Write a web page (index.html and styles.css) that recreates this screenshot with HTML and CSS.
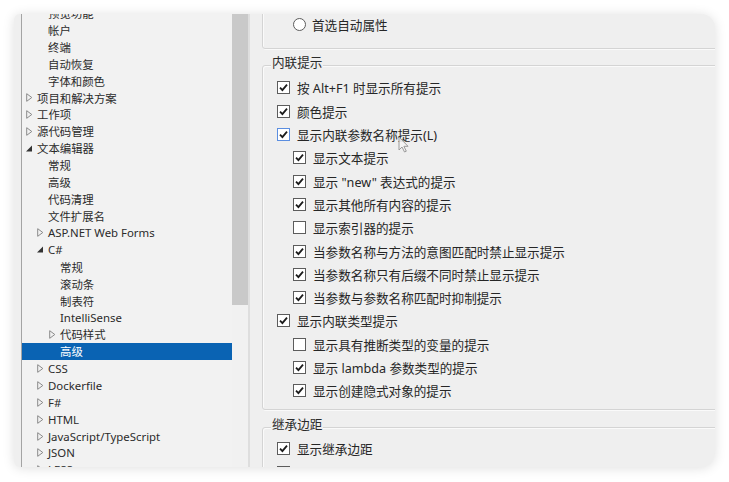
FILE: index.html
```html
<!DOCTYPE html>
<html lang="zh-CN">
<head>
<meta charset="utf-8">
<title>选项</title>
<link rel="stylesheet" href="styles.css">
</head>
<body>
<div class="card">
  <div class="tree">
    <ul class="tree-list">
      <li class="trow lv1"><span class="slot"></span>预览功能</li>
      <li class="trow lv1"><span class="slot"></span>帐户</li>
      <li class="trow lv1"><span class="slot"></span>终端</li>
      <li class="trow lv1"><span class="slot"></span>自动恢复</li>
      <li class="trow lv1"><span class="slot"></span>字体和颜色</li>
      <li class="trow lv0"><span class="slot"><svg class="arr" width="7" height="9" viewBox="0 0 7 9"><polygon points="0.7,0.7 5.8,4.5 0.7,8.3" fill="none" stroke="#8a8a8a" stroke-width="1"/></svg></span>项目和解决方案</li>
      <li class="trow lv0"><span class="slot"><svg class="arr" width="7" height="9" viewBox="0 0 7 9"><polygon points="0.7,0.7 5.8,4.5 0.7,8.3" fill="none" stroke="#8a8a8a" stroke-width="1"/></svg></span>工作项</li>
      <li class="trow lv0"><span class="slot"><svg class="arr" width="7" height="9" viewBox="0 0 7 9"><polygon points="0.7,0.7 5.8,4.5 0.7,8.3" fill="none" stroke="#8a8a8a" stroke-width="1"/></svg></span>源代码管理</li>
      <li class="trow lv0"><span class="slot"><svg class="arr" width="7" height="9" viewBox="0 0 7 9"><polygon points="6,1.5 6,7.5 0,7.5" fill="#333"/></svg></span>文本编辑器</li>
      <li class="trow lv1"><span class="slot"></span>常规</li>
      <li class="trow lv1"><span class="slot"></span>高级</li>
      <li class="trow lv1"><span class="slot"></span>代码清理</li>
      <li class="trow lv1"><span class="slot"></span>文件扩展名</li>
      <li class="trow lv1"><span class="slot"><svg class="arr" width="7" height="9" viewBox="0 0 7 9"><polygon points="0.7,0.7 5.8,4.5 0.7,8.3" fill="none" stroke="#8a8a8a" stroke-width="1"/></svg></span>ASP.NET Web Forms</li>
      <li class="trow lv1"><span class="slot"><svg class="arr" width="7" height="9" viewBox="0 0 7 9"><polygon points="6,1.5 6,7.5 0,7.5" fill="#333"/></svg></span>C#</li>
      <li class="trow lv2"><span class="slot"></span>常规</li>
      <li class="trow lv2"><span class="slot"></span>滚动条</li>
      <li class="trow lv2"><span class="slot"></span>制表符</li>
      <li class="trow lv2"><span class="slot"></span>IntelliSense</li>
      <li class="trow lv2"><span class="slot"><svg class="arr" width="7" height="9" viewBox="0 0 7 9"><polygon points="0.7,0.7 5.8,4.5 0.7,8.3" fill="none" stroke="#8a8a8a" stroke-width="1"/></svg></span>代码样式</li>
      <li class="trow lv2 selected"><span class="slot"></span>高级</li>
      <li class="trow lv1"><span class="slot"><svg class="arr" width="7" height="9" viewBox="0 0 7 9"><polygon points="0.7,0.7 5.8,4.5 0.7,8.3" fill="none" stroke="#8a8a8a" stroke-width="1"/></svg></span>CSS</li>
      <li class="trow lv1"><span class="slot"><svg class="arr" width="7" height="9" viewBox="0 0 7 9"><polygon points="0.7,0.7 5.8,4.5 0.7,8.3" fill="none" stroke="#8a8a8a" stroke-width="1"/></svg></span>Dockerfile</li>
      <li class="trow lv1"><span class="slot"><svg class="arr" width="7" height="9" viewBox="0 0 7 9"><polygon points="0.7,0.7 5.8,4.5 0.7,8.3" fill="none" stroke="#8a8a8a" stroke-width="1"/></svg></span>F#</li>
      <li class="trow lv1"><span class="slot"><svg class="arr" width="7" height="9" viewBox="0 0 7 9"><polygon points="0.7,0.7 5.8,4.5 0.7,8.3" fill="none" stroke="#8a8a8a" stroke-width="1"/></svg></span>HTML</li>
      <li class="trow lv1"><span class="slot"><svg class="arr" width="7" height="9" viewBox="0 0 7 9"><polygon points="0.7,0.7 5.8,4.5 0.7,8.3" fill="none" stroke="#8a8a8a" stroke-width="1"/></svg></span>JavaScript/TypeScript</li>
      <li class="trow lv1"><span class="slot"><svg class="arr" width="7" height="9" viewBox="0 0 7 9"><polygon points="0.7,0.7 5.8,4.5 0.7,8.3" fill="none" stroke="#8a8a8a" stroke-width="1"/></svg></span>JSON</li>
      <li class="trow lv1"><span class="slot"><svg class="arr" width="7" height="9" viewBox="0 0 7 9"><polygon points="0.7,0.7 5.8,4.5 0.7,8.3" fill="none" stroke="#8a8a8a" stroke-width="1"/></svg></span>LESS</li>
    </ul>
  </div>
  <div class="scroll"><div class="thumb"></div><div class="track"></div></div>
  <div class="panel">
    <div class="group g1">
      <div class="opt l2"><span class="radio"></span><span>首选自动属性</span></div>
    </div>
    <div class="group g2">
      <span class="legend">内联提示</span>
      <div class="opt"><span class="box"><svg viewBox="0 0 11 11" width="11" height="11"><path d="M2 5.6 L4.4 8.1 L9 2.6" fill="none" stroke="#1b1b1b" stroke-width="1.8"/></svg></span><span>按 Alt+F1 时显示所有提示</span></div>
      <div class="opt"><span class="box"><svg viewBox="0 0 11 11" width="11" height="11"><path d="M2 5.6 L4.4 8.1 L9 2.6" fill="none" stroke="#1b1b1b" stroke-width="1.8"/></svg></span><span>颜色提示</span></div>
      <div class="opt"><span class="box focus"><svg viewBox="0 0 11 11" width="11" height="11"><path d="M2 5.6 L4.4 8.1 L9 2.6" fill="none" stroke="#1b1b1b" stroke-width="1.8"/></svg></span><span>显示内联参数名称提示(L)</span></div>
      <div class="opt l2"><span class="box"><svg viewBox="0 0 11 11" width="11" height="11"><path d="M2 5.6 L4.4 8.1 L9 2.6" fill="none" stroke="#1b1b1b" stroke-width="1.8"/></svg></span><span>显示文本提示</span></div>
      <div class="opt l2"><span class="box"><svg viewBox="0 0 11 11" width="11" height="11"><path d="M2 5.6 L4.4 8.1 L9 2.6" fill="none" stroke="#1b1b1b" stroke-width="1.8"/></svg></span><span>显示 "new" 表达式的提示</span></div>
      <div class="opt l2"><span class="box"><svg viewBox="0 0 11 11" width="11" height="11"><path d="M2 5.6 L4.4 8.1 L9 2.6" fill="none" stroke="#1b1b1b" stroke-width="1.8"/></svg></span><span>显示其他所有内容的提示</span></div>
      <div class="opt l2"><span class="box"></span><span>显示索引器的提示</span></div>
      <div class="opt l2"><span class="box"><svg viewBox="0 0 11 11" width="11" height="11"><path d="M2 5.6 L4.4 8.1 L9 2.6" fill="none" stroke="#1b1b1b" stroke-width="1.8"/></svg></span><span>当参数名称与方法的意图匹配时禁止显示提示</span></div>
      <div class="opt l2"><span class="box"><svg viewBox="0 0 11 11" width="11" height="11"><path d="M2 5.6 L4.4 8.1 L9 2.6" fill="none" stroke="#1b1b1b" stroke-width="1.8"/></svg></span><span>当参数名称只有后缀不同时禁止显示提示</span></div>
      <div class="opt l2"><span class="box"><svg viewBox="0 0 11 11" width="11" height="11"><path d="M2 5.6 L4.4 8.1 L9 2.6" fill="none" stroke="#1b1b1b" stroke-width="1.8"/></svg></span><span>当参数与参数名称匹配时抑制提示</span></div>
      <div class="opt"><span class="box"><svg viewBox="0 0 11 11" width="11" height="11"><path d="M2 5.6 L4.4 8.1 L9 2.6" fill="none" stroke="#1b1b1b" stroke-width="1.8"/></svg></span><span>显示内联类型提示</span></div>
      <div class="opt l2"><span class="box"></span><span>显示具有推断类型的变量的提示</span></div>
      <div class="opt l2"><span class="box"><svg viewBox="0 0 11 11" width="11" height="11"><path d="M2 5.6 L4.4 8.1 L9 2.6" fill="none" stroke="#1b1b1b" stroke-width="1.8"/></svg></span><span>显示 lambda 参数类型的提示</span></div>
      <div class="opt l2"><span class="box"><svg viewBox="0 0 11 11" width="11" height="11"><path d="M2 5.6 L4.4 8.1 L9 2.6" fill="none" stroke="#1b1b1b" stroke-width="1.8"/></svg></span><span>显示创建隐式对象的提示</span></div>
    </div>
    <div class="group g3">
      <span class="legend">继承边距</span>
      <div class="opt"><span class="box"><svg viewBox="0 0 11 11" width="11" height="11"><path d="M2 5.6 L4.4 8.1 L9 2.6" fill="none" stroke="#1b1b1b" stroke-width="1.8"/></svg></span><span>显示继承边距</span></div>
      <div class="opt"><span class="box"></span><span>将继承边距与指示器边距合并</span></div>
    </div>
    <svg class="pointer" width="12" height="17" viewBox="0 0 12 17"><path d="M1 1 L1 14 L4 11 L6.5 16 L8.3 15.2 L5.9 10.3 L10 10.3 Z" fill="#f4f4f4" fill-opacity="0.85" stroke="#9a9a9a" stroke-width="1" stroke-linejoin="round"/></svg>
  </div>
</div>
</body>
</html>
```

FILE: styles.css
```css
html, body {
  margin: 0;
  padding: 0;
}

body {
  width: 729px;
  height: 482px;
  overflow: hidden;
  background: #ffffff;
  font-family: "Noto Sans", "Noto Sans CJK SC", sans-serif;
}

.card {
  margin: 14px 0 0 14px;
  width: 701px;
  height: 453px;
  box-sizing: border-box;
  padding-left: 7px;
  display: flex;
  background: #efefef;
  border-radius: 6px 14px 14px 6px;
  box-shadow: 0 1px 12px rgba(0, 0, 0, 0.13);
  overflow: hidden;
}

/* ---------- tree ---------- */
.tree {
  flex: none;
  width: 211px;
  box-sizing: border-box;
  border-left: 1px solid #a4a4a4;
  background: #f2f2f2;
  overflow: hidden;
}

.tree-list {
  list-style: none;
  margin: -9.5px 0 0;
  padding: 0;
}

.trow {
  height: 16.93px;
  display: flex;
  align-items: center;
  font-size: 11.4px;
  color: #2b2b2b;
  white-space: nowrap;
}

.trow.lv0 { padding-left: 3px; }
.trow.lv1 { padding-left: 14px; }
.trow.lv2 { padding-left: 26px; }

.trow.selected {
  background: #0a63b3;
  color: #ffffff;
}

.slot {
  flex: none;
  width: 12px;
  height: 100%;
  display: flex;
  align-items: center;
}

.arr {
  margin-left: 1px;
  display: block;
}

/* ---------- scrollbar ---------- */
.scroll {
  flex: none;
  width: 18px;
  box-sizing: border-box;
  border-right: 2px solid #dedede;
  display: flex;
  flex-direction: column;
}

.thumb {
  height: 291px;
  background: #c9c9c9;
}

.track {
  flex: 1;
  background: #f1f1f1;
}

/* ---------- right panel ---------- */
.panel {
  flex: 1;
  min-width: 0;
  position: relative;
  padding-left: 12px;
}

.group {
  position: relative;
  margin-right: -30px;
  border: 1px solid #d4d4d4;
  border-radius: 3px;
  box-shadow: inset 1px 1px 0 #fafafa, 1px 1px 0 #fafafa;
  padding-left: 14px;
}

.g1 {
  margin-top: -20px;
  padding-top: 17.5px;
  padding-bottom: 12.5px;
}

.g2 {
  margin-top: 15.7px;
  padding-top: 10.35px;
  padding-bottom: 6.45px;
}

.g3 {
  margin-top: 17px;
  padding-top: 9.35px;
}

.legend {
  position: absolute;
  left: 8px;
  top: -11px;
  height: 16px;
  line-height: 16px;
  padding: 0 1px;
  background: #efefef;
  font-size: 12.6px;
  color: #2b2b2b;
}

.opt {
  height: 23.3px;
  display: flex;
  align-items: center;
  font-size: 12.6px;
  color: #262626;
  white-space: nowrap;
}

.opt.l2 {
  padding-left: 16px;
}

.box {
  flex: none;
  width: 13px;
  height: 13px;
  box-sizing: border-box;
  border: 1px solid #5c5c5c;
  background: #ffffff;
  margin-right: 7px;
  display: flex;
  align-items: center;
  justify-content: center;
}

.box svg {
  display: block;
}

.box.focus {
  border-color: #5b8ee0;
}

.radio {
  flex: none;
  width: 13px;
  height: 13px;
  box-sizing: border-box;
  border: 1px solid #5c5c5c;
  border-radius: 50%;
  background: #ffffff;
  margin-right: 6px;
}

.pointer {
  position: absolute;
  left: 148px;
  top: 122px;
}
```
